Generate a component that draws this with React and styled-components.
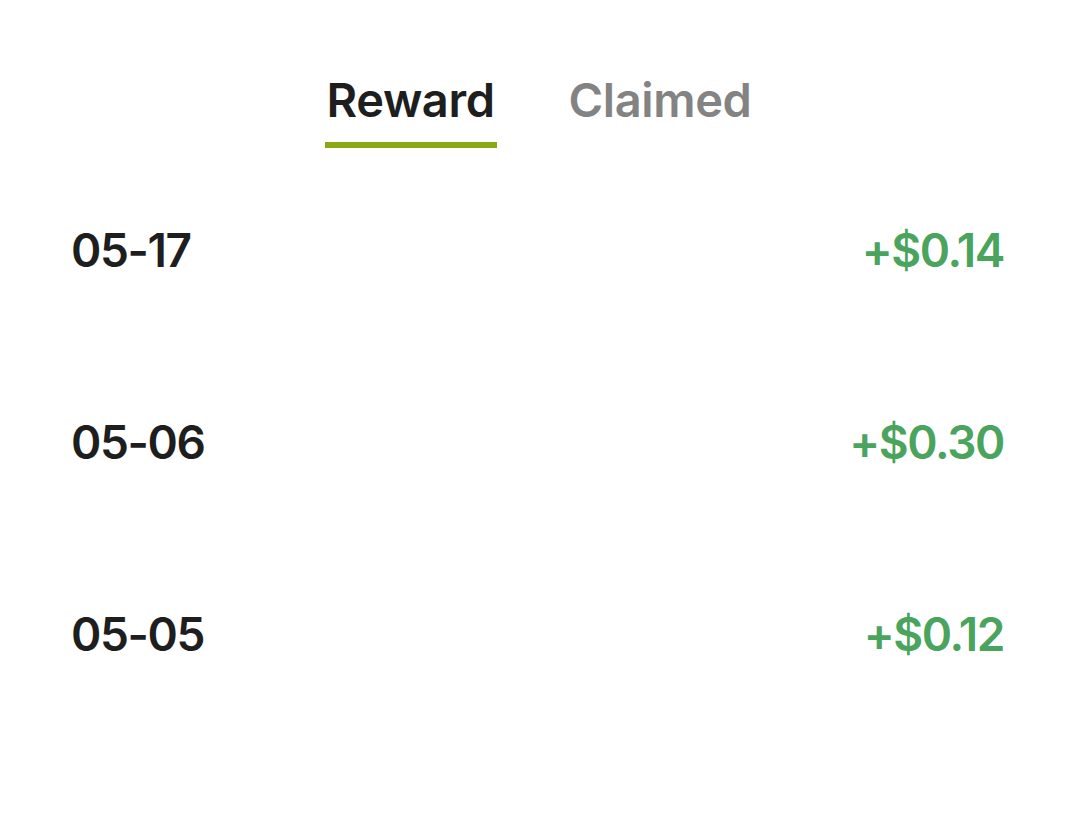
import React from "react";
import styled, { createGlobalStyle } from "styled-components";

const Global = createGlobalStyle`
  html, body { margin: 0; padding: 0; background: #ffffff; }
  body { font-family: "Inter", "Noto Sans", sans-serif; }
`;

const Page = styled.div`
  width: 1078px;
  min-height: 822px;
  background: #fff;
  display: flex;
  flex-direction: column;
`;

const Tabs = styled.div`
  display: flex;
  justify-content: center;
  gap: 74px;
  padding-top: 72px;
`;

const Tab = styled.div`
  display: flex;
  flex-direction: column;
  align-items: center;
  font-size: 47px;
  font-weight: 600;
  letter-spacing: -0.4px;
  line-height: 56px;
  color: ${(p) => (p.$active ? "#1e1e1e" : "#838383")};
  &::after {
    content: "";
    display: block;
    margin-top: 14px;
    height: 6px;
    width: calc(100% + 4px);
    background: ${(p) => (p.$active ? "#88a816" : "transparent")};
  }
`;

const List = styled.div`
  display: flex;
  flex-direction: column;
  padding: 6px 74px 0 71px;
`;

const Row = styled.div`
  display: flex;
  justify-content: space-between;
  align-items: center;
  height: 192px;
`;

const DateText = styled.span`
  font-size: 46px;
  font-weight: 600;
  letter-spacing: -1.4px;
  color: #1e1e1e;
`;

const Amount = styled.span`
  font-size: 46px;
  font-weight: 600;
  letter-spacing: -1.4px;
  color: #4aa45e;
`;

const rows = [
  { d: "05-17", a: "+$0.14" },
  { d: "05-06", a: "+$0.30" },
  { d: "05-05", a: "+$0.12" },
];

export default function App() {
  return (
    <Page>
      <Global />
      <Tabs>
        <Tab $active>Reward</Tab>
        <Tab>Claimed</Tab>
      </Tabs>
      <List>
        {rows.map((r) => (
          <Row key={r.d}>
            <DateText>{r.d}</DateText>
            <Amount>{r.a}</Amount>
          </Row>
        ))}
      </List>
    </Page>
  );
}
